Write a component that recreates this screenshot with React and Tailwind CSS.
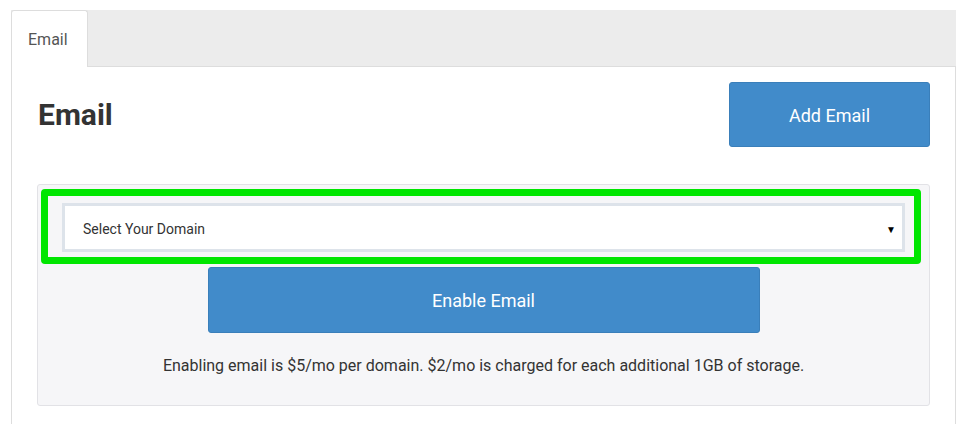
export default function App() {
  return (
    <div className="min-h-[424px] bg-white pt-[10px] pl-[11px] pr-[23px] text-[#333]" style={{ fontFamily: 'Roboto, "Liberation Sans", sans-serif' }}>
      <div className="flex h-[57px] bg-[#ececec] border-b border-[#ddd]">
        <div className="w-[77px] -mb-px bg-white border border-b-0 border-[#ddd] rounded-t-[3px] flex items-center pl-[16px] pt-[2px] text-[16px] text-[#555]">
          Email
        </div>
      </div>
      <div className="border-x border-[#ddd] px-[25px] pt-[15px] pb-[20px]">
        <div className="flex items-start justify-between">
          <h1 className="mt-[16px] ml-px text-[30px] leading-[34px] font-bold text-[#333]">Email</h1>
          <button className="w-[201px] h-[65px] bg-[#418bca] border border-[#3a7fba] rounded-[3px] text-white text-[18px] pt-[2px]">
            Add Email
          </button>
        </div>
        <div className="mt-[37px] h-[222px] bg-[#f6f6f8] border border-[#e2e2e6] rounded-[3px] pt-[4px]">
          <div className="ml-[3px] mr-[8px] h-[75px] border-[7px] border-[#00e600] rounded-[4px] pt-[7px] pl-[14px] pr-[9px]">
            <div className="h-[49px] bg-white border-[3px] border-[#dde3ea] flex items-center justify-between pl-[18px] pr-[6px] pt-[4px] text-[14px] text-[#333]">
              <span>Select Your Domain</span>
              <span className="text-[10px] text-black">▼</span>
            </div>
          </div>
          <div className="flex justify-center mt-[3px]">
            <button className="w-[552px] h-[66px] bg-[#418bca] border border-[#3a7fba] rounded-[3px] text-white text-[18px]">
              Enable Email
            </button>
          </div>
          <p className="mt-[21px] text-center text-[16px] text-[#333]">
            Enabling email is $5/mo per domain. $2/mo is charged for each additional 1GB of storage.
          </p>
        </div>
      </div>
    </div>
  );
}
